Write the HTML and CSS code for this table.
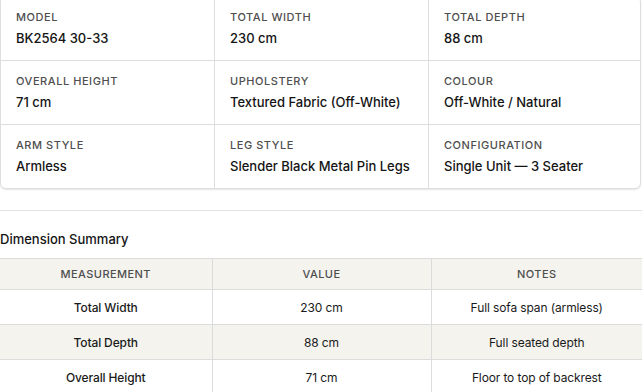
FILE: index.html
```html
<!DOCTYPE html>
<html>
<head>
<meta charset="utf-8">
<link rel="stylesheet" href="styles.css">
</head>
<body>
<div class="page">
  <div class="spec-card">
    <div class="cell"><div class="label">Model</div><div class="value">BK2564 30-33</div></div>
    <div class="cell"><div class="label">Total Width</div><div class="value">230 cm</div></div>
    <div class="cell"><div class="label">Total Depth</div><div class="value">88 cm</div></div>
    <div class="cell"><div class="label">Overall Height</div><div class="value">71 cm</div></div>
    <div class="cell"><div class="label">Upholstery</div><div class="value">Textured Fabric (Off-White)</div></div>
    <div class="cell"><div class="label">Colour</div><div class="value">Off-White / Natural</div></div>
    <div class="cell"><div class="label">Arm Style</div><div class="value">Armless</div></div>
    <div class="cell"><div class="label">Leg Style</div><div class="value">Slender Black Metal Pin Legs</div></div>
    <div class="cell"><div class="label">Configuration</div><div class="value">Single Unit — 3 Seater</div></div>
  </div>
  <hr class="divider">
  <h3 class="section-title">Dimension Summary</h3>
  <table class="dims">
    <thead>
      <tr><th class="c1">Measurement</th><th class="c2">Value</th><th>Notes</th></tr>
    </thead>
    <tbody>
      <tr><td class="name">Total Width</td><td>230 cm</td><td>Full sofa span (armless)</td></tr>
      <tr class="alt"><td class="name">Total Depth</td><td>88 cm</td><td>Full seated depth</td></tr>
      <tr><td class="name">Overall Height</td><td>71 cm</td><td>Floor to top of backrest</td></tr>
    </tbody>
  </table>
</div>
</body>
</html>
```
FILE: styles.css
```css
* { box-sizing: border-box; }
html, body { margin: 0; padding: 0; background: #fff; }
body {
  font-family: Inter, "Noto Sans", sans-serif;
  color: #1a1a1a;
  overflow: hidden;
}
.page { width: 642px; }
.spec-card {
  margin: -4px 1px 0 0;
  display: grid;
  grid-template-columns: 214px 214px 1fr;
  border: 1px solid #dedede;
  border-radius: 6px;
  box-shadow: 0 1px 2px rgba(0,0,0,0.10);
  background: #fff;
  overflow: hidden;
}
.cell {
  height: 64px;
  padding: 13px 16px 0 15px;
  border-right: 1px solid #dedede;
  border-bottom: 1px solid #dedede;
}
.cell:nth-child(3n) { border-right: none; }
.cell:nth-child(n+7) { border-bottom: none; height: 63px; }
.label {
  font-size: 11px;
  font-weight: 500;
  letter-spacing: 0.05em;
  text-transform: uppercase;
  color: #4e4e4e;
  line-height: 14px;
}
.value {
  margin-top: 5px;
  font-size: 13px;
  font-weight: 500;
  letter-spacing: 0;
  line-height: 18px;
  color: #141414;
}
.divider {
  margin: 21px 0 0;
  border: none;
  border-top: 1px solid #e2e2e2;
  height: 0;
}
.section-title {
  margin: 19px 0 0;
  font-size: 13px;
  font-weight: 500;
  letter-spacing: 0;
  line-height: 18px;
  color: #141414;
}
.dims {
  margin-top: 10px;
  width: 642px;
  border-collapse: collapse;
  font-size: 12px;
  letter-spacing: -0.01em;
}
.dims th, .dims td {
  text-align: center;
  border: 1px solid #dcdcdc;
  padding: 0 8px;
}
.dims tr > :first-child { border-left: none; }
.dims tr > :last-child { border-right: none; }
.dims th {
  height: 31px;
  background: #f4f3ee;
  font-size: 11px;
  font-weight: 500;
  letter-spacing: 0.04em;
  text-transform: uppercase;
  color: #4e4e4e;
}
.dims th.c1 { width: 212px; }
.dims th.c2 { width: 219px; }
.dims td { height: 35px; color: #1a1a1a; }
.dims td.name { font-weight: 500; }
.dims tr.alt td { background: #f4f3ee; }
```
